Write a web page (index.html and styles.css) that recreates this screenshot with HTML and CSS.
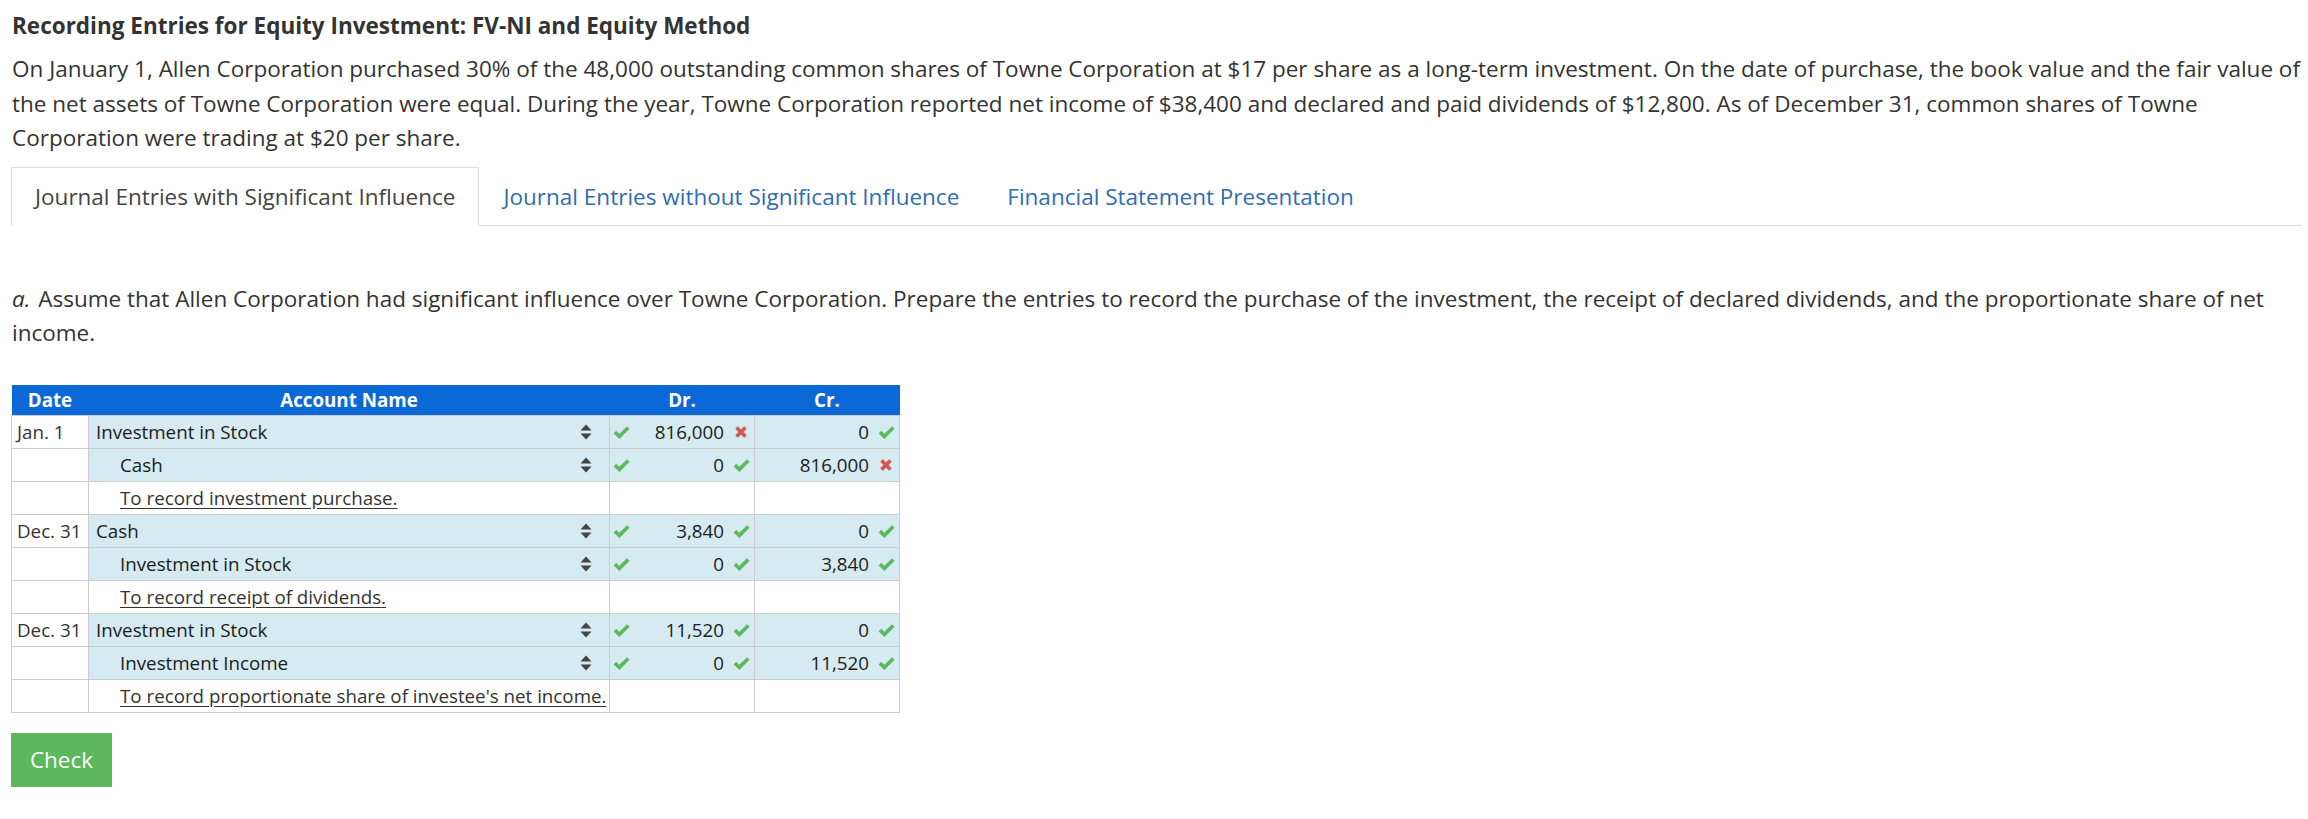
FILE: index.html
```html
<!DOCTYPE html>
<html lang="en">
<head>
<meta charset="utf-8">
<title>Recording Entries for Equity Investment</title>
<link rel="stylesheet" href="styles.css">
</head>
<body>
<div class="page">
  <h1 class="title">Recording Entries for Equity Investment: FV-NI and Equity Method</h1>
  <p class="intro">On January 1, Allen Corporation purchased 30% of the 48,000 outstanding common shares of Towne Corporation at $17 per share as a long-term investment. On the date of purchase, the book value and the fair value of the net assets of Towne Corporation were equal. During the year, Towne Corporation reported net income of $38,400 and declared and paid dividends of $12,800. As of December 31, common shares of Towne Corporation were trading at $20 per share.</p>

  <div class="tabs">
    <div class="tab active">Journal Entries with Significant Influence</div>
    <div class="tab">Journal Entries without Significant Influence</div>
    <div class="tab">Financial Statement Presentation</div>
  </div>

  <div class="tab-body">
    <p class="question"><em class="part">a.</em> Assume that Allen Corporation had significant influence over Towne Corporation. Prepare the entries to record the purchase of the investment, the receipt of declared dividends, and the proportionate share of net income.</p>

    <table class="journal">
      <colgroup>
        <col class="c-date"><col class="c-acct"><col class="c-amt"><col class="c-amt">
      </colgroup>
      <thead>
        <tr><th>Date</th><th>Account Name</th><th>Dr.</th><th>Cr.</th></tr>
      </thead>
      <tbody>
        <tr class="entry">
          <td class="date">Jan. 1</td>
          <td class="acct"><div class="acct-in"><span>Investment in Stock</span><svg class="sort" viewBox="0 0 12 16"><path d="M6 0.5 L11.5 6.5 H0.5 Z M0.5 9.5 H11.5 L6 15.5 Z"/></svg></div></td>
          <td class="amt"><div class="amt-in"><svg class="ok lead" viewBox="0 0 16 13"><path d="M1.8 6.6 L6 10.6 L14.4 2.2"/></svg><span class="val">816,000</span><svg class="bad" viewBox="0 0 14 14"><path d="M2.5 2.5 L11.5 11.5 M11.5 2.5 L2.5 11.5"/></svg></div></td>
          <td class="amt"><div class="amt-in"><span class="val">0</span><svg class="ok" viewBox="0 0 16 13"><path d="M1.8 6.6 L6 10.6 L14.4 2.2"/></svg></div></td>
        </tr>
        <tr class="entry">
          <td class="date"></td>
          <td class="acct"><div class="acct-in indent"><span>Cash</span><svg class="sort" viewBox="0 0 12 16"><path d="M6 0.5 L11.5 6.5 H0.5 Z M0.5 9.5 H11.5 L6 15.5 Z"/></svg></div></td>
          <td class="amt"><div class="amt-in"><svg class="ok lead" viewBox="0 0 16 13"><path d="M1.8 6.6 L6 10.6 L14.4 2.2"/></svg><span class="val">0</span><svg class="ok" viewBox="0 0 16 13"><path d="M1.8 6.6 L6 10.6 L14.4 2.2"/></svg></div></td>
          <td class="amt"><div class="amt-in"><span class="val">816,000</span><svg class="bad" viewBox="0 0 14 14"><path d="M2.5 2.5 L11.5 11.5 M11.5 2.5 L2.5 11.5"/></svg></div></td>
        </tr>
        <tr class="note">
          <td class="date"></td>
          <td class="acct"><span class="indent-link">To record investment purchase.</span></td>
          <td></td><td></td>
        </tr>

        <tr class="entry">
          <td class="date">Dec. 31</td>
          <td class="acct"><div class="acct-in"><span>Cash</span><svg class="sort" viewBox="0 0 12 16"><path d="M6 0.5 L11.5 6.5 H0.5 Z M0.5 9.5 H11.5 L6 15.5 Z"/></svg></div></td>
          <td class="amt"><div class="amt-in"><svg class="ok lead" viewBox="0 0 16 13"><path d="M1.8 6.6 L6 10.6 L14.4 2.2"/></svg><span class="val">3,840</span><svg class="ok" viewBox="0 0 16 13"><path d="M1.8 6.6 L6 10.6 L14.4 2.2"/></svg></div></td>
          <td class="amt"><div class="amt-in"><span class="val">0</span><svg class="ok" viewBox="0 0 16 13"><path d="M1.8 6.6 L6 10.6 L14.4 2.2"/></svg></div></td>
        </tr>
        <tr class="entry">
          <td class="date"></td>
          <td class="acct"><div class="acct-in indent"><span>Investment in Stock</span><svg class="sort" viewBox="0 0 12 16"><path d="M6 0.5 L11.5 6.5 H0.5 Z M0.5 9.5 H11.5 L6 15.5 Z"/></svg></div></td>
          <td class="amt"><div class="amt-in"><svg class="ok lead" viewBox="0 0 16 13"><path d="M1.8 6.6 L6 10.6 L14.4 2.2"/></svg><span class="val">0</span><svg class="ok" viewBox="0 0 16 13"><path d="M1.8 6.6 L6 10.6 L14.4 2.2"/></svg></div></td>
          <td class="amt"><div class="amt-in"><span class="val">3,840</span><svg class="ok" viewBox="0 0 16 13"><path d="M1.8 6.6 L6 10.6 L14.4 2.2"/></svg></div></td>
        </tr>
        <tr class="note">
          <td class="date"></td>
          <td class="acct"><span class="indent-link">To record receipt of dividends.</span></td>
          <td></td><td></td>
        </tr>

        <tr class="entry">
          <td class="date">Dec. 31</td>
          <td class="acct"><div class="acct-in"><span>Investment in Stock</span><svg class="sort" viewBox="0 0 12 16"><path d="M6 0.5 L11.5 6.5 H0.5 Z M0.5 9.5 H11.5 L6 15.5 Z"/></svg></div></td>
          <td class="amt"><div class="amt-in"><svg class="ok lead" viewBox="0 0 16 13"><path d="M1.8 6.6 L6 10.6 L14.4 2.2"/></svg><span class="val">11,520</span><svg class="ok" viewBox="0 0 16 13"><path d="M1.8 6.6 L6 10.6 L14.4 2.2"/></svg></div></td>
          <td class="amt"><div class="amt-in"><span class="val">0</span><svg class="ok" viewBox="0 0 16 13"><path d="M1.8 6.6 L6 10.6 L14.4 2.2"/></svg></div></td>
        </tr>
        <tr class="entry">
          <td class="date"></td>
          <td class="acct"><div class="acct-in indent"><span>Investment Income</span><svg class="sort" viewBox="0 0 12 16"><path d="M6 0.5 L11.5 6.5 H0.5 Z M0.5 9.5 H11.5 L6 15.5 Z"/></svg></div></td>
          <td class="amt"><div class="amt-in"><svg class="ok lead" viewBox="0 0 16 13"><path d="M1.8 6.6 L6 10.6 L14.4 2.2"/></svg><span class="val">0</span><svg class="ok" viewBox="0 0 16 13"><path d="M1.8 6.6 L6 10.6 L14.4 2.2"/></svg></div></td>
          <td class="amt"><div class="amt-in"><span class="val">11,520</span><svg class="ok" viewBox="0 0 16 13"><path d="M1.8 6.6 L6 10.6 L14.4 2.2"/></svg></div></td>
        </tr>
        <tr class="note">
          <td class="date"></td>
          <td class="acct"><span class="indent-link">To record proportionate share of investee's net income.</span></td>
          <td></td><td></td>
        </tr>
      </tbody>
    </table>

    <button class="check-btn" type="button">Check</button>
  </div>
</div>
</body>
</html>
```

FILE: styles.css
```css
html, body {
  margin: 0;
  padding: 0;
  background: #ffffff;
}

body {
  font-family: "Open Sans", "Noto Sans", sans-serif;
  color: #333333;
}

.page {
  padding: 9px 6px 0 11px;
}

.title {
  margin: 0 0 9px 1px;
  font-size: 22.5px;
  font-weight: 700;
  line-height: 34px;
  color: #333333;
}

.intro {
  margin: 0 0 11px 1px;
  font-size: 22.5px;
  line-height: 34.6px;
}

.tabs {
  display: flex;
  border-bottom: 1px solid #dddddd;
}

.tab {
  padding: 0 23px;
  font-size: 22.5px;
  line-height: 57px;
  color: #2f6db0;
  border: 1px solid transparent;
  margin-bottom: -1px;
}

.tab.active {
  color: #444444;
  background: #ffffff;
  border-color: #dddddd #dddddd #ffffff;
}

.tab-body {
  padding-top: 56px;
}

.question {
  margin: 0 0 35px 1px;
  font-size: 22.5px;
  line-height: 34px;
}

.question .part {
  font-style: italic;
  padding-right: 2px;
}

.journal {
  border-collapse: collapse;
  table-layout: fixed;
  width: 889px;
  font-size: 18.75px;
  color: #1c1c1c;
}

.c-date { width: 77px; }
.c-acct { width: 521px; }
.c-amt { width: 145px; }

.journal th {
  background: #0a68d7;
  color: #ffffff;
  font-weight: 700;
  height: 30px;
  padding: 0;
  line-height: 30px;
  text-align: center;
  border: 0;
}

.journal td {
  height: 32px;
  padding: 0;
  border: 1px solid #cccccc;
  vertical-align: middle;
  white-space: nowrap;
}

.journal tr.entry td {
  background: #d5eaf1;
}

.journal tr.entry td.date,
.journal tr.note td {
  background: #ffffff;
}

.journal td.date {
  padding-left: 5px;
  color: #333333;
}

.acct-in {
  display: flex;
  align-items: center;
  padding-left: 7px;
  padding-right: 17px;
}

.acct-in span {
  flex: 1;
}

.acct-in.indent {
  padding-left: 31px;
}

.indent-link {
  display: inline-block;
  padding-left: 31px;
  text-decoration: underline;
  text-underline-offset: 3px;
  color: #333333;
}

.sort {
  width: 12px;
  height: 16px;
  fill: #444444;
}

.amt-in {
  display: flex;
  align-items: center;
  padding: 0 4px 0 3px;
}

.val {
  flex: 1;
  text-align: right;
  margin-right: 9px;
}

.ok {
  width: 17px;
  height: 14px;
  fill: none;
  stroke: #5cb85c;
  stroke-width: 3.4;
  stroke-linecap: butt;
  stroke-linejoin: miter;
}

.ok.lead {
  margin-left: 0;
}

.bad {
  width: 14px;
  height: 14px;
  margin: 0 2px 0 1px;
  fill: none;
  stroke: #d9534f;
  stroke-width: 3.6;
}

.check-btn {
  display: block;
  margin-top: 20px;
  width: 101px;
  height: 54px;
  padding: 0;
  border: 0;
  border-radius: 0;
  background: #5cb85c;
  color: #ffffff;
  font-family: "Open Sans", "Noto Sans", sans-serif;
  font-size: 22.5px;
}
```
